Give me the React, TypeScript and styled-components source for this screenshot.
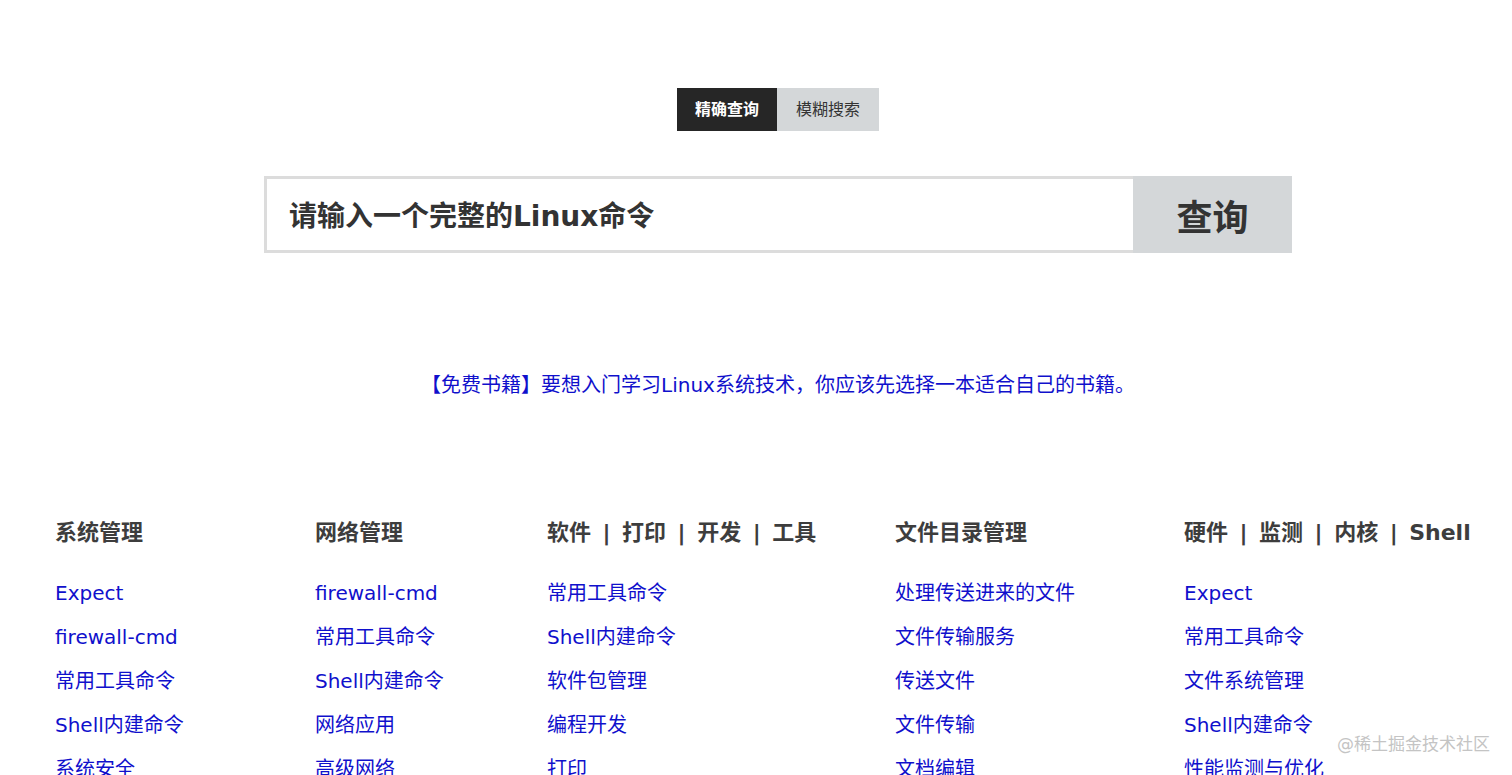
import React from 'react';
import styled, { createGlobalStyle } from 'styled-components';

const FONT = `"DejaVu Sans", "Noto Sans CJK SC", sans-serif`;

const GlobalStyle = createGlobalStyle`
  html, body {
    margin: 0;
    padding: 0;
    background: #fff;
    font-family: ${FONT};
  }
`;

const columns = [
  {
    title: '系统管理',
    links: ['Expect', 'firewall-cmd', '常用工具命令', 'Shell内建命令', '系统安全'],
  },
  {
    title: '网络管理',
    links: ['firewall-cmd', '常用工具命令', 'Shell内建命令', '网络应用', '高级网络'],
  },
  {
    title: ['软件', '打印', '开发', '工具'],
    links: ['常用工具命令', 'Shell内建命令', '软件包管理', '编程开发', '打印'],
  },
  {
    title: '文件目录管理',
    links: ['处理传送进来的文件', '文件传输服务', '传送文件', '文件传输', '文档编辑'],
  },
  {
    title: ['硬件', '监测', '内核', 'Shell'],
    links: ['Expect', '常用工具命令', '文件系统管理', 'Shell内建命令', '性能监测与优化'],
  },
];

export default function App() {
  return (
    <Page>
      <GlobalStyle />
      <Main>
        <Tabs>
          <Tab $active>精确查询</Tab>
          <Tab>模糊搜索</Tab>
        </Tabs>
        <SearchBar>
          <SearchInput placeholder="请输入一个完整的Linux命令" />
          <SearchButton>查询</SearchButton>
        </SearchBar>
        <Notice href="#">【免费书籍】要想入门学习Linux系统技术，你应该先选择一本适合自己的书籍。</Notice>
      </Main>
      <Columns>
        {columns.map((col, i) => (
          <Column key={i}>
            <ColumnTitle>
              {Array.isArray(col.title)
                ? col.title.map((t, j) => (
                    <React.Fragment key={t}>
                      {j > 0 && <Sep>|</Sep>}
                      {t}
                    </React.Fragment>
                  ))
                : col.title}
            </ColumnTitle>
            <LinkList>
              {col.links.map((l) => (
                <li key={l}>
                  <ItemLink href="#">{l}</ItemLink>
                </li>
              ))}
            </LinkList>
          </Column>
        ))}
      </Columns>
      <Watermark>@稀土掘金技术社区</Watermark>
    </Page>
  );
}

const Page = styled.div`
  position: relative;
  width: 1512px;
  min-height: 775px;
  padding-left: 44px;
  box-sizing: border-box;
  overflow: hidden;
`;

const Main = styled.div`
  display: flex;
  flex-direction: column;
  align-items: center;
  padding-top: 88px;
`;

const Tabs = styled.div`
  display: flex;
`;

const Tab = styled.div<{ $active?: boolean }>`
  height: 43px;
  line-height: 43px;
  padding: 0 ${(p) => (p.$active ? 18 : 19)}px;
  font-size: 16px;
  background: ${(p) => (p.$active ? '#262626' : '#d4d7d9')};
  color: ${(p) => (p.$active ? '#fff' : '#333')};
  font-weight: ${(p) => (p.$active ? 600 : 400)};
  cursor: pointer;
`;

const SearchBar = styled.div`
  display: flex;
  margin-top: 45px;
  width: 1028px;
  height: 77px;
`;

const SearchInput = styled.input`
  flex: 1;
  box-sizing: border-box;
  height: 100%;
  border: 3px solid #dcdcdc;
  border-right: none;
  padding: 3px 22px 0;
  font-family: ${FONT};
  font-size: 28px;
  font-weight: 700;
  outline: none;

  &::placeholder {
    color: #333;
    opacity: 1;
  }
`;

const SearchButton = styled.button`
  width: 159px;
  height: 100%;
  border: none;
  background: #d4d7d9;
  color: #333;
  font-family: ${FONT};
  font-size: 36px;
  font-weight: 700;
  cursor: pointer;
`;

const Notice = styled.a`
  margin-top: 117px;
  line-height: 30px;
  font-size: 20px;
  color: #1010cc;
  text-decoration: none;
`;

const Columns = styled.div`
  display: grid;
  grid-template-columns: 260px 232px 348px 289px auto;
  margin-top: 118px;
  padding-left: 11px;
`;

const Column = styled.div`
  display: flex;
  flex-direction: column;
`;

const ColumnTitle = styled.h3`
  margin: 0;
  line-height: 30px;
  font-size: 22px;
  font-weight: 700;
  color: #3d3d3d;
  white-space: nowrap;
`;

const Sep = styled.span`
  margin: 0 11.5px;
`;

const LinkList = styled.ul`
  list-style: none;
  margin: 24px 0 0;
  padding: 0;

  li {
    line-height: 43px;
  }
`;

const ItemLink = styled.a`
  font-size: 20px;
  color: #1010cc;
  text-decoration: none;
  white-space: nowrap;
`;

const Watermark = styled.div`
  position: absolute;
  right: 22px;
  top: 730px;
  font-size: 17px;
  color: #c4c4c4;
  pointer-events: none;
`;
